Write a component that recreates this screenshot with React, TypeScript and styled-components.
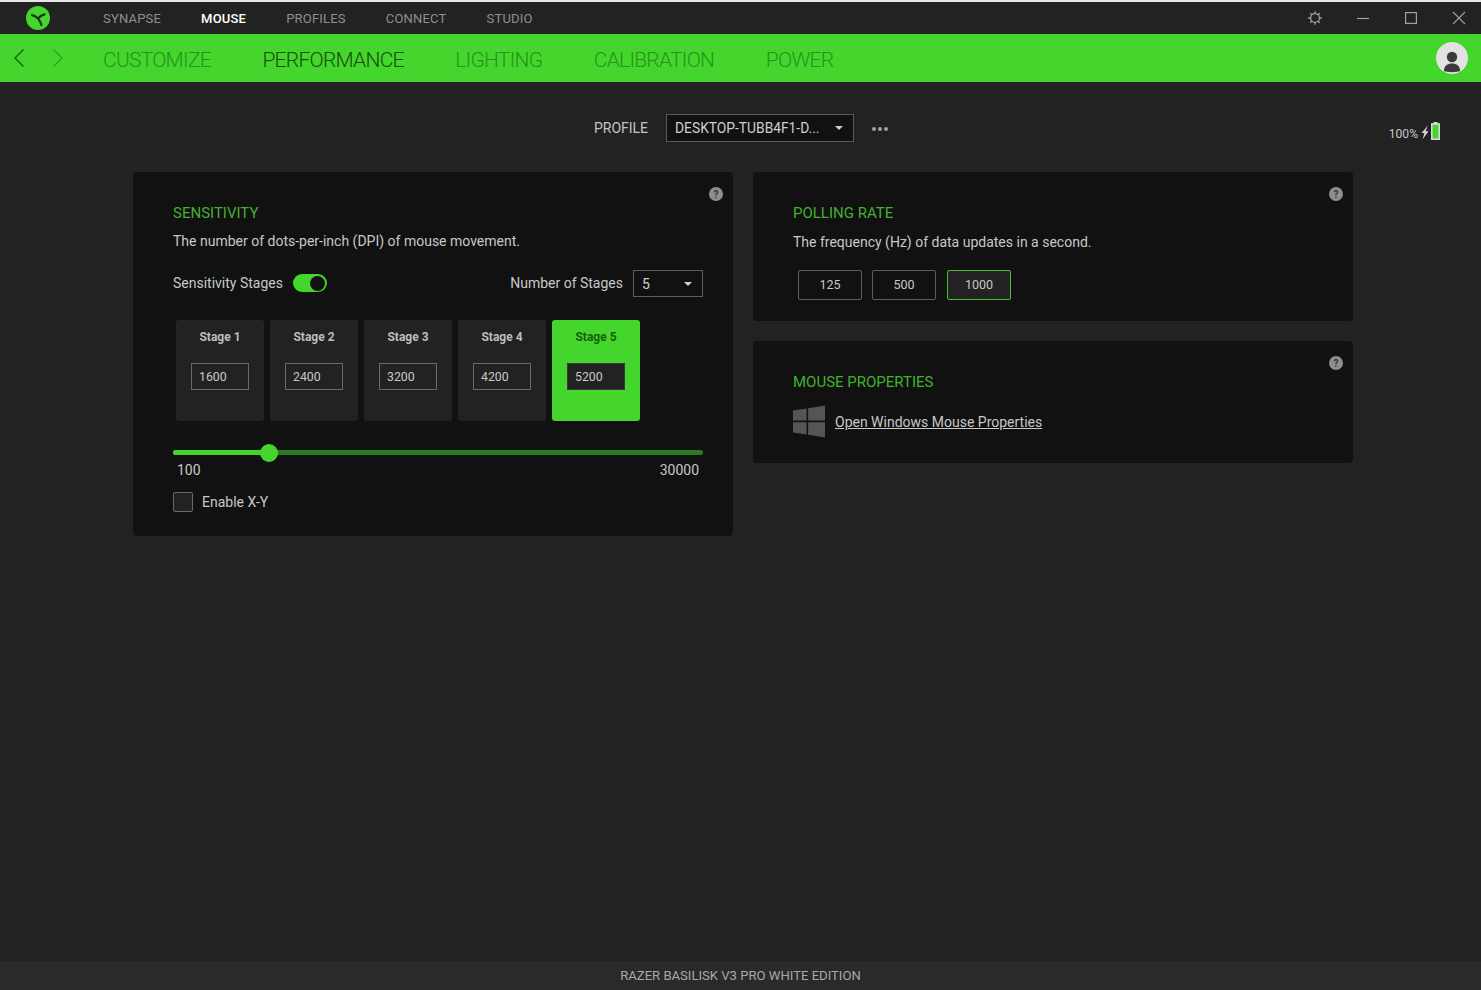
import styled, { createGlobalStyle } from 'styled-components';

const GlobalStyle = createGlobalStyle`
  html, body {
    margin: 0;
    padding: 0;
    background: #222222;
    font-family: Roboto, "Liberation Sans", sans-serif;
  }
  * {
    box-sizing: border-box;
  }
`;

const topItems = ['SYNAPSE', 'MOUSE', 'PROFILES', 'CONNECT', 'STUDIO'];
const subItems = ['CUSTOMIZE', 'PERFORMANCE', 'LIGHTING', 'CALIBRATION', 'POWER'];
const stages = [1600, 2400, 3200, 4200, 5200];

const App = () => {
  return (
    <Page>
      <GlobalStyle />
      <TitleBar>
        <Logo>
          <svg width="26" height="26" viewBox="0 0 26 26">
            <circle cx="13" cy="13" r="12" fill="#44d62c" />
            <path d="M7 10.2C9 10.6 11 11.6 13 13.4C14.6 11.6 16.6 10 19.6 9.4M13 13.4C14.4 15.2 15.6 17.4 16.4 20" fill="none" stroke="#1d2a1a" strokeWidth="2.2" strokeLinecap="round" />
          </svg>
        </Logo>
        <TopNav>
          {topItems.map((item) => (
            <TopLink key={item} $active={item === 'MOUSE'}>
              {item}
            </TopLink>
          ))}
        </TopNav>
        <WindowControls>
          <WindowButton>
            <svg width="16" height="16" viewBox="0 0 16 16" fill="none" stroke="#a0a0a0" strokeWidth="1.3">
              <circle cx="8" cy="8" r="4.4" />
              <path d="M8 1.2v2.2M8 12.6v2.2M1.2 8h2.2M12.6 8h2.2M3.2 3.2l1.5 1.5M11.3 11.3l1.5 1.5M12.8 3.2l-1.5 1.5M4.7 11.3l-1.5 1.5" />
            </svg>
          </WindowButton>
          <WindowButton>
            <svg width="14" height="14" viewBox="0 0 14 14" fill="none" stroke="#a0a0a0" strokeWidth="1.2">
              <path d="M1 7.5h12" />
            </svg>
          </WindowButton>
          <WindowButton>
            <svg width="14" height="14" viewBox="0 0 14 14" fill="none" stroke="#a0a0a0" strokeWidth="1.2">
              <rect x="1.6" y="1.6" width="10.8" height="10.8" />
            </svg>
          </WindowButton>
          <WindowButton>
            <svg width="14" height="14" viewBox="0 0 14 14" fill="none" stroke="#a0a0a0" strokeWidth="1.1">
              <path d="M1 1l12 12M13 1L1 13" />
            </svg>
          </WindowButton>
        </WindowControls>
      </TitleBar>

      <SubBar>
        <Arrows>
          <svg width="12" height="20" viewBox="0 0 12 20" fill="none" stroke="#1c5c14" strokeWidth="1.4">
            <path d="M10.5 1.5L2 10l8.5 8.5" />
          </svg>
          <svg width="12" height="20" viewBox="0 0 12 20" fill="none" stroke="#30a020" strokeWidth="1.4">
            <path d="M1.5 1.5L10 10l-8.5 8.5" />
          </svg>
        </Arrows>
        <SubNav>
          {subItems.map((item) => (
            <SubLink key={item} $active={item === 'PERFORMANCE'}>
              {item}
            </SubLink>
          ))}
        </SubNav>
        <Avatar>
          <svg width="32" height="32" viewBox="0 0 32 32">
            <circle cx="16" cy="16" r="16" fill="#e2e2e2" />
            <circle cx="16" cy="15" r="5.2" fill="#3a3a3c" />
            <path d="M8 29 C8 23.5 11.5 21.5 16 21.5 C20.5 21.5 24 23.5 24 29 C21.5 30.5 10.5 30.5 8 29 Z" fill="#3a3a3c" />
          </svg>
        </Avatar>
      </SubBar>

      <Content>
        <ProfileRow>
          <ProfileLabel>PROFILE</ProfileLabel>
          <ProfileSelect>
            <span>DESKTOP-TUBB4F1-D...</span>
            <Caret />
          </ProfileSelect>
          <Dots>
            <i />
            <i />
            <i />
          </Dots>
          <Battery>
            <span>100%</span>
            <svg width="21" height="18" viewBox="0 0 21 18">
              <path d="M8 3.5L1.5 11h3L2.5 17.5 8.5 9.2H5.5z" fill="#d8d8d8" />
              <rect x="13.5" y="0" width="4" height="2" fill="#d8d8d8" />
              <rect x="11.8" y="2" width="7.4" height="15.2" fill="#44d62c" stroke="#d8d8d8" strokeWidth="1.6" />
            </svg>
          </Battery>
        </ProfileRow>

        <Columns>
          <Card $pad="31px 30px 24px 40px">
            <Help>?</Help>
            <CardTitle>SENSITIVITY</CardTitle>
            <CardText>The number of dots-per-inch (DPI) of mouse movement.</CardText>
            <StagesHeader>
              <ToggleGroup>
                <Label>Sensitivity Stages</Label>
                <Toggle />
              </ToggleGroup>
              <ToggleGroup>
                <Label>Number of Stages</Label>
                <StageSelect>
                  <span>5</span>
                  <Caret />
                </StageSelect>
              </ToggleGroup>
            </StagesHeader>
            <StageRow>
              {stages.map((value, i) => (
                <StageCard key={value} $active={i === 4}>
                  <StageName $active={i === 4}>Stage {i + 1}</StageName>
                  <StageInput $active={i === 4}>{value}</StageInput>
                </StageCard>
              ))}
            </StageRow>
            <Slider>
              <SliderFill style={{ width: `${(96 / 530) * 100}%` }} />
              <SliderThumb style={{ left: `${(96 / 530) * 100}%` }} />
            </Slider>
            <SliderLabels>
              <span>100</span>
              <span>30000</span>
            </SliderLabels>
            <CheckRow>
              <CheckBox />
              <Label>Enable X-Y</Label>
            </CheckRow>
          </Card>

          <RightColumn>
            <Card $pad="31px 30px 21px 40px">
              <Help>?</Help>
              <CardTitle>POLLING RATE</CardTitle>
              <PollingText>The frequency (Hz) of data updates in a second.</PollingText>
              <RateRow>
                <RateButton>125</RateButton>
                <RateButton>500</RateButton>
                <RateButton $active>1000</RateButton>
              </RateRow>
            </Card>
            <Card $pad="31px 30px 25px 40px">
              <Help>?</Help>
              <CardTitle>MOUSE PROPERTIES</CardTitle>
              <LinkRow>
                <svg width="32" height="33" viewBox="0 0 33 33" fill="#555555" preserveAspectRatio="none">
                  <path d="M0 5.5L14 3.4V15.6H0zM15.6 3.2L33 0.4V15.6H15.6zM0 17.2H14V29.6L0 27.5zM15.6 17.2H33V32.6L15.6 29.8z" />
                </svg>
                <MouseLink>Open Windows Mouse Properties</MouseLink>
              </LinkRow>
            </Card>
          </RightColumn>
        </Columns>
      </Content>

      <Footer>RAZER BASILISK V3 PRO WHITE EDITION</Footer>
    </Page>
  );
};

export default App;

const Page = styled.div`
  height: 990px;
  display: flex;
  flex-direction: column;
  background: #222222;
  color: #cfcfcf;
  overflow: hidden;
`;

const TitleBar = styled.header`
  height: 34px;
  flex: none;
  display: flex;
  align-items: center;
  padding-left: 25px;
  background: #222222;
  border-top: 2px solid #e6e6e6;
`;

const Logo = styled.div`
  width: 26px;
  height: 26px;
  display: flex;
`;

const TopNav = styled.nav`
  display: flex;
  gap: 40px;
  margin-left: 52px;
`;

const TopLink = styled.a<{ $active?: boolean }>`
  font-size: 13px;
  letter-spacing: 0.2px;
  font-weight: ${(p) => (p.$active ? 500 : 400)};
  color: ${(p) => (p.$active ? '#ffffff' : '#8f8f8f')};
`;

const WindowControls = styled.div`
  margin-left: auto;
  margin-right: -2px;
  display: flex;
`;

const WindowButton = styled.div`
  width: 48px;
  height: 32px;
  display: flex;
  align-items: center;
  justify-content: center;
`;

const SubBar = styled.div`
  height: 48px;
  flex: none;
  display: flex;
  align-items: center;
  padding: 0 13px;
  background: #44d62c;
`;

const Arrows = styled.div`
  display: flex;
  gap: 27px;
`;

const SubNav = styled.nav`
  display: flex;
  gap: 51.5px;
  margin-left: 39px;
  padding-top: 4px;
`;

const SubLink = styled.a<{ $active?: boolean }>`
  font-size: 21px;
  font-weight: 300;
  letter-spacing: -0.75px;
  color: ${(p) => (p.$active ? '#14500c' : '#26941a')};
`;

const Avatar = styled.div`
  margin-left: auto;
  display: flex;
`;

const Content = styled.main`
  flex: 1;
  padding: 32px 128px 0 133px;
`;

const ProfileRow = styled.div`
  position: relative;
  height: 58px;
  display: flex;
  align-items: flex-start;
  justify-content: center;
  padding-right: 4px;
`;

const ProfileLabel = styled.span`
  font-size: 14px;
  line-height: 28px;
  color: #c4c4c4;
  margin-right: 18px;
`;

const ProfileSelect = styled.div`
  width: 188px;
  height: 28px;
  display: flex;
  align-items: center;
  justify-content: space-between;
  padding: 0 10px 0 8px;
  font-size: 13.8px;
  color: #cfcfcf;
  background: #111111;
  border: 1px solid #5a5a5a;
`;

const Caret = styled.i`
  width: 0;
  height: 0;
  border-left: 4px solid transparent;
  border-right: 4px solid transparent;
  border-top: 4px solid #d0d0d0;
`;

const Dots = styled.div`
  display: flex;
  gap: 2px;
  margin-left: 18px;
  height: 30px;
  align-items: center;

  i {
    width: 4px;
    height: 4px;
    border-radius: 50%;
    background: #a0a0a0;
  }
`;

const Battery = styled.div`
  position: absolute;
  top: 8px;
  right: -88px;
  display: flex;
  align-items: flex-start;
  gap: 2px;
  font-size: 12.1px;
  line-height: 14px;
  color: #c8c8c8;

  span {
    margin-top: 5px;
  }
`;

const Columns = styled.div`
  display: grid;
  grid-template-columns: 600px 600px;
  gap: 20px;
  align-items: start;
`;

const RightColumn = styled.div`
  display: flex;
  flex-direction: column;
  gap: 20px;
`;

const Card = styled.section<{ $pad: string }>`
  position: relative;
  padding: ${(p) => p.$pad};
  background: #111111;
  border-radius: 4px;
`;

const Help = styled.span`
  position: absolute;
  top: 15px;
  right: 10px;
  width: 14px;
  height: 14px;
  display: flex;
  align-items: center;
  justify-content: center;
  border-radius: 50%;
  background: #8e8e8e;
  color: #333333;
  font-size: 10px;
  font-weight: 700;
`;

const CardTitle = styled.h2`
  margin: 0;
  font-size: 15px;
  line-height: 20px;
  font-weight: 400;
  color: #44b030;
`;

const CardText = styled.p`
  margin: 8px 0 0;
  font-size: 14px;
  line-height: 20px;
  color: #c8c8c8;
`;

const PollingText = styled(CardText)`
  margin-top: 9px;
`;

const StagesHeader = styled.div`
  display: flex;
  align-items: center;
  justify-content: space-between;
  margin-top: 19px;
`;

const Label = styled.span`
  font-size: 14px;
  color: #c8c8c8;
`;

const ToggleGroup = styled.div`
  display: flex;
  align-items: center;
  gap: 10px;

  ${Label} {
    margin-bottom: 2px;
  }
`;

const Toggle = styled.div`
  position: relative;
  width: 34px;
  height: 18px;
  margin-bottom: 1px;
  border-radius: 9px;
  background: #44d62c;

  &::after {
    content: '';
    position: absolute;
    top: 1.5px;
    right: 1.5px;
    width: 15px;
    height: 15px;
    border-radius: 50%;
    background: #111111;
  }
`;

const StageSelect = styled.div`
  width: 70px;
  height: 27px;
  display: flex;
  align-items: center;
  justify-content: space-between;
  padding: 0 10px 0 8px;
  font-size: 14px;
  border: 1px solid #5e5e5e;
`;

const StageRow = styled.div`
  display: flex;
  gap: 6px;
  margin: 23px 0 0 3px;
`;

const StageCard = styled.div<{ $active?: boolean }>`
  width: 88px;
  height: 101px;
  display: flex;
  flex-direction: column;
  align-items: center;
  padding-top: 10px;
  border-radius: 3px;
  background: ${(p) => (p.$active ? '#44d62c' : '#222222')};
`;

const StageName = styled.div<{ $active?: boolean }>`
  font-size: 12px;
  line-height: 14px;
  font-weight: 700;
  color: ${(p) => (p.$active ? '#14600c' : '#bdbdbd')};
`;

const StageInput = styled.div<{ $active?: boolean }>`
  width: 58px;
  height: 27px;
  margin-top: 19px;
  display: flex;
  align-items: center;
  padding-left: 7px;
  font-size: 12.3px;
  color: #c8c8c8;
  background: #222222;
  border: 1px solid ${(p) => (p.$active ? '#3a3a3a' : '#6a6a6a')};
`;

const Slider = styled.div`
  position: relative;
  height: 5px;
  margin-top: 29px;
  border-radius: 3px;
  background: #2a7a20;
`;

const SliderFill = styled.div`
  height: 100%;
  border-radius: 3px;
  background: #44d62c;
`;

const SliderThumb = styled.div`
  position: absolute;
  top: -6px;
  width: 18px;
  height: 18px;
  margin-left: -9px;
  border-radius: 50%;
  background: #44d62c;
`;

const SliderLabels = styled.div`
  display: flex;
  justify-content: space-between;
  padding: 0 4px;
  margin-top: 5px;
  font-size: 14px;
  line-height: 20px;
  color: #c8c8c8;
`;

const CheckRow = styled.div`
  display: flex;
  align-items: center;
  gap: 9px;
  margin-top: 12px;
`;

const CheckBox = styled.div`
  width: 20px;
  height: 20px;
  border-radius: 2px;
  background: #222222;
  border: 1px solid #6a6a6a;
`;

const RateRow = styled.div`
  display: flex;
  gap: 10px;
  margin: 18px 0 0 5px;
`;

const RateButton = styled.div<{ $active?: boolean }>`
  width: 64px;
  height: 30px;
  margin-left: ${(p) => (p.$active ? '1px' : '0')};
  padding-bottom: 1px;
  display: flex;
  align-items: center;
  justify-content: center;
  font-size: 12.5px;
  color: #c8c8c8;
  border-radius: 2px;
  background: ${(p) => (p.$active ? '#222222' : 'transparent')};
  border: 1px solid ${(p) => (p.$active ? '#44c02e' : '#5e5e5e')};
`;

const LinkRow = styled.div`
  display: flex;
  align-items: center;
  gap: 10px;
  margin-top: 13px;
`;

const MouseLink = styled.a`
  font-size: 14px;
  color: #c8c8c8;
  text-decoration: underline;
`;

const Footer = styled.footer`
  height: 29px;
  flex: none;
  display: flex;
  align-items: center;
  justify-content: center;
  background: #2a2a2a;
  font-size: 13.1px;
  color: #a8a8a8;
`;
